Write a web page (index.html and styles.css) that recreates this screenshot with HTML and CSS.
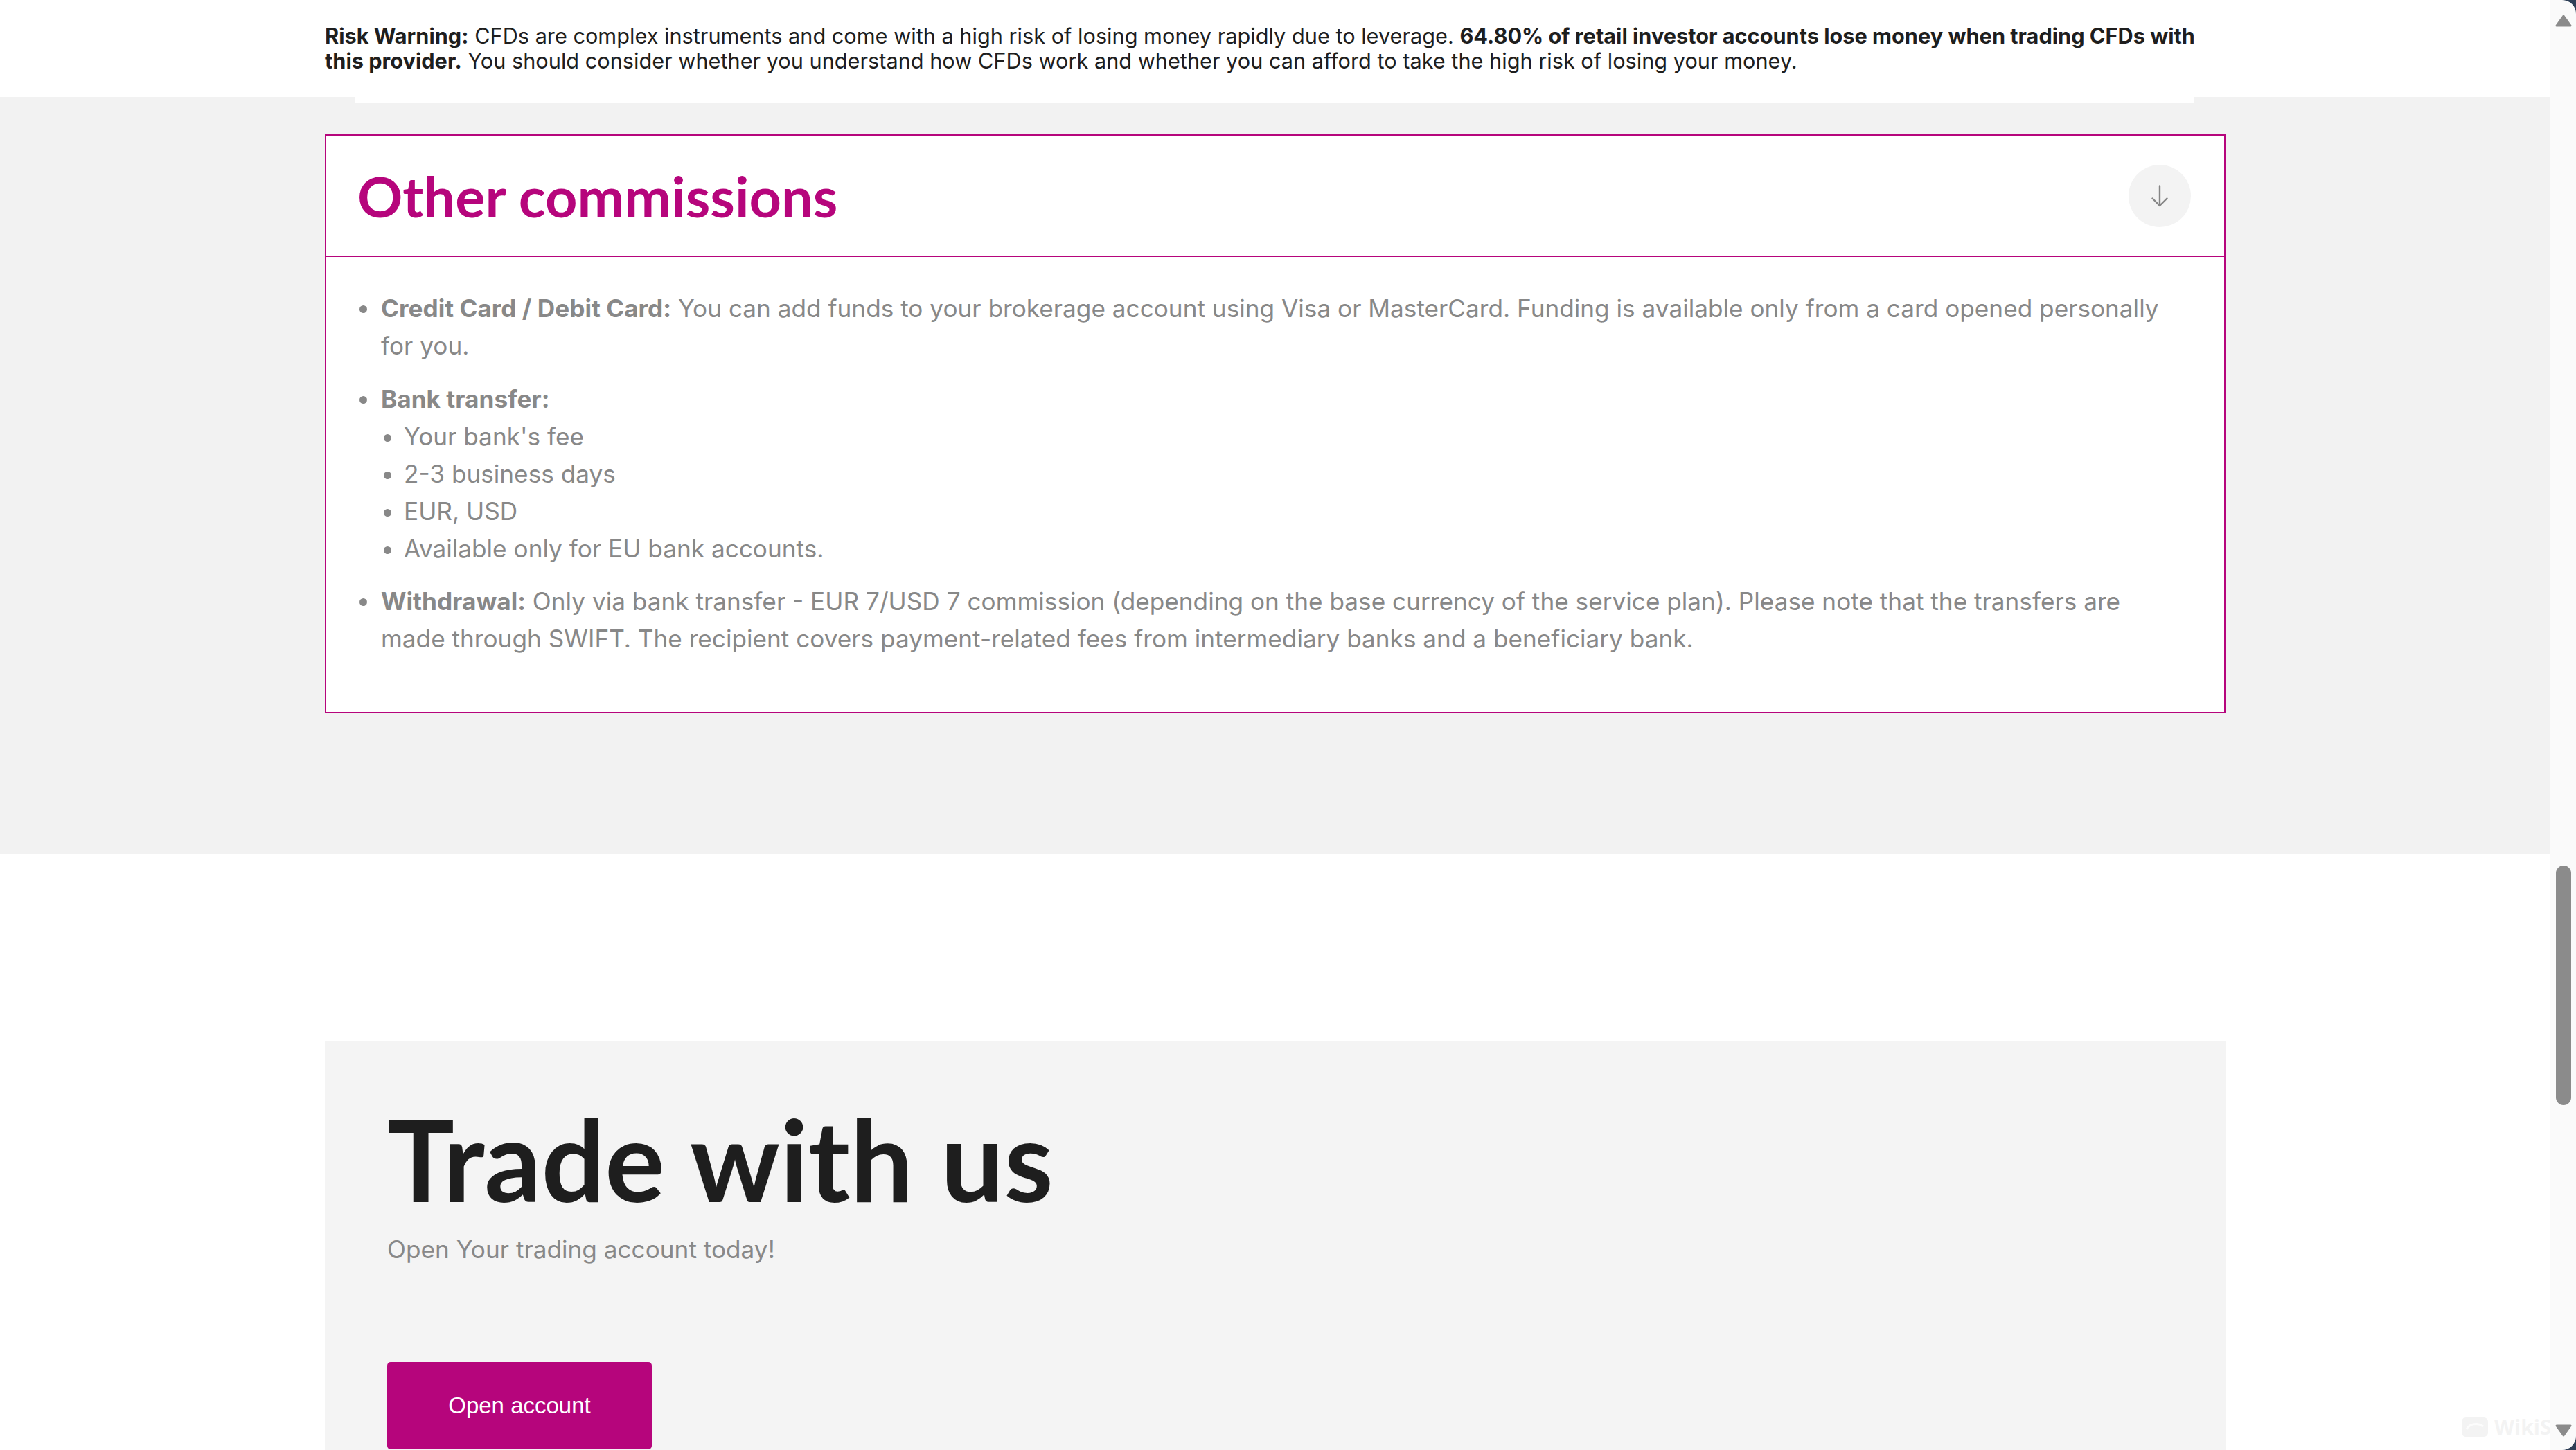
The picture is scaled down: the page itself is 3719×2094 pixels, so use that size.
FILE: index.html
```html
<!DOCTYPE html>
<html lang="en">
<head>
<meta charset="utf-8">
<title>Other commissions</title>
<link rel="stylesheet" href="styles.css">
</head>
<body>
<div class="page">
  <header class="topbar">
    <div class="container">
      <p class="risk"><strong>Risk Warning:</strong> CFDs are complex instruments and come with a high risk of losing money rapidly due to leverage. <strong>64.80% of retail investor accounts lose money when trading CFDs with this provider.</strong> You should consider whether you understand how CFDs work and whether you can afford to take the high risk of losing your money.</p>
    </div>
  </header>

  <section class="gray">
    <div class="container">
      <div class="prev"></div>
      <div class="card">
        <div class="card-head">
          <h2 class="card-title">Other commissions</h2>
          <button class="toggle" type="button" aria-label="Toggle">
            <svg width="24" height="32" viewBox="0 0 24 32"><path d="M12 1.5V30M1.5 19.5L12 30L22.5 19.5" fill="none" stroke="#858585" stroke-width="2.4" stroke-linecap="round" stroke-linejoin="round"/></svg>
          </button>
        </div>
        <div class="card-body">
          <ul class="list">
            <li><strong>Credit Card / Debit Card:</strong> You can add funds to your brokerage account using Visa or MasterCard. Funding is available only from a card opened personally for you.</li>
            <li><strong>Bank transfer:</strong>
              <ul class="sub">
                <li>Your bank's fee</li>
                <li>2-3 business days</li>
                <li>EUR, USD</li>
                <li>Available only for EU bank accounts.</li>
              </ul>
            </li>
            <li><strong>Withdrawal:</strong> Only via bank transfer - EUR 7/USD 7 commission (depending on the base currency of the service plan). Please note that the transfers are made through SWIFT. The recipient covers payment-related fees from intermediary banks and a beneficiary bank.</li>
          </ul>
        </div>
      </div>
    </div>
  </section>

  <section class="white">
    <div class="container">
      <div class="cta">
        <h2 class="cta-title">Trade with us</h2>
        <p class="cta-sub">Open Your trading account today!</p>
        <a class="cta-btn" href="#">Open account</a>
      </div>
    </div>
  </section>
</div>

<div class="scrollbar">
  <svg class="sb-up" width="24" height="18" viewBox="0 0 24 18"><path d="M12 2L22 16H2Z" fill="#8b8b8b" stroke="#8b8b8b" stroke-width="3" stroke-linejoin="round"/></svg>
  <div class="sb-thumb"></div>
  <svg class="sb-down" width="24" height="18" viewBox="0 0 24 18"><path d="M12 16L22 2H2Z" fill="#8b8b8b" stroke="#8b8b8b" stroke-width="3" stroke-linejoin="round"/></svg>
</div>

<div class="watermark">
  <svg width="40" height="30" viewBox="0 0 40 30"><rect x="1" y="1" width="38" height="28" rx="6" fill="#f3f3f3"/><path d="M8 18c4-8 16-10 24-4" fill="none" stroke="#fcfcfc" stroke-width="3"/></svg>
  <span>WikiStock</span>
</div>

<svg class="corner corner-tr" width="20" height="20" viewBox="0 0 20 20"><path d="M0 0H20V20A20 20 0 0 0 0 0Z" fill="#2d3e56"/></svg>
<svg class="corner corner-br" width="20" height="20" viewBox="0 0 20 20"><path d="M20 0V20H0A20 20 0 0 0 20 0Z" fill="#2d3e56"/></svg>
</body>
</html>
```
FILE: styles.css
```css
* {
  box-sizing: border-box;
  margin: 0;
  padding: 0;
}

body {
  margin: 0;
  height: 2094px;
  overflow: hidden;
  display: flex;
  background: #ffffff;
  font-family: Inter, "Noto Sans", sans-serif;
  position: relative;
}

.page {
  flex: 1;
  min-width: 0;
  display: flex;
  flex-direction: column;
  overflow: hidden;
}

.container {
  width: 2744px;
  margin: 0 auto;
}

/* top risk warning */
.topbar {
  background: #ffffff;
  height: 140px;
  padding-top: 34px;
  flex: none;
}

.risk {
  font-size: 30.7px;
  line-height: 36px;
  color: #1e1e1e;
}

.risk strong {
  font-weight: 700;
}

/* gray section with accordion card */
.gray {
  background: #f2f2f2;
  padding-bottom: 203px;
  flex: none;
}

.prev {
  height: 9px;
  background: #ffffff;
  margin: 0 46px 0 43px;
}

.card {
  margin-top: 45px;
  border: 2px solid #b6057c;
  background: #ffffff;
}

.card-head {
  height: 175px;
  display: flex;
  align-items: center;
  justify-content: space-between;
  padding: 0 48px 0 45px;
  border-bottom: 2px solid #b6057c;
}

.card-title {
  font-family: Lato, "Open Sans", sans-serif;
  font-weight: 700;
  font-size: 81px;
  line-height: 1;
  color: #b6057c;
}

.toggle {
  width: 90px;
  height: 90px;
  border: none;
  border-radius: 50%;
  background: #f3f3f3;
  display: flex;
  align-items: center;
  justify-content: center;
}

.card-body {
  padding: 47px 71px 79px 45px;
}

.list {
  list-style: none;
  padding-left: 34px;
  font-size: 35.2px;
  line-height: 54px;
  color: #888888;
}

.list strong {
  font-weight: 700;
}

.list > li {
  position: relative;
  margin-bottom: 22.5px;
}

.list > li:last-child {
  margin-bottom: 0;
}

.list li::before {
  content: "";
  position: absolute;
  left: -31px;
  top: 23px;
  width: 11px;
  height: 11px;
  border-radius: 50%;
  background: #888888;
}

.sub {
  list-style: none;
  padding-left: 33px;
}

.sub li {
  position: relative;
}

.sub li::before {
  left: -29px;
  top: 24px;
}

/* call to action */
.white {
  background: #ffffff;
  padding-top: 270px;
  flex: none;
}

.cta {
  background: #f4f4f4;
  height: 700px;
  padding: 74px 90px 0;
}

.cta-title {
  font-family: Lato, "Open Sans", sans-serif;
  font-weight: 700;
  font-size: 162px;
  line-height: 1.2;
  color: #1e1e1e;
  margin-bottom: 6px;
}

.cta-sub {
  font-size: 35.2px;
  line-height: 54px;
  color: #888888;
}

.cta-btn {
  margin-top: 136px;
  width: 382px;
  height: 126px;
  display: flex;
  align-items: center;
  justify-content: center;
  background: #b6057c;
  color: #ffffff;
  border-radius: 5px;
  text-decoration: none;
  font-family: "Liberation Sans", Arial, sans-serif;
  font-size: 33px;
}

/* fake scrollbar */
.scrollbar {
  width: 37px;
  flex: none;
  background: #fafafa;
  display: flex;
  flex-direction: column;
  align-items: flex-start;
  position: relative;
  z-index: 2;
}

.sb-up {
  margin: 21px 0 0 7px;
  display: block;
}

.sb-thumb {
  margin: 1211px 0 0 8px;
  width: 22px;
  height: 346px;
  border-radius: 11px;
  background: #8b8b8b;
}

.sb-down {
  margin: auto 0 19px 7px;
  display: block;
}

.watermark {
  position: absolute;
  left: 3553px;
  top: 2040px;
  display: flex;
  align-items: center;
  gap: 8px;
  font-family: "Open Sans", sans-serif;
  font-weight: 700;
  font-size: 30px;
  color: #f3f3f3;
  z-index: 1;
}

.corner {
  position: absolute;
  right: 0;
  z-index: 3;
}

.corner-tr {
  top: 0;
}

.corner-br {
  bottom: 0;
}
```
